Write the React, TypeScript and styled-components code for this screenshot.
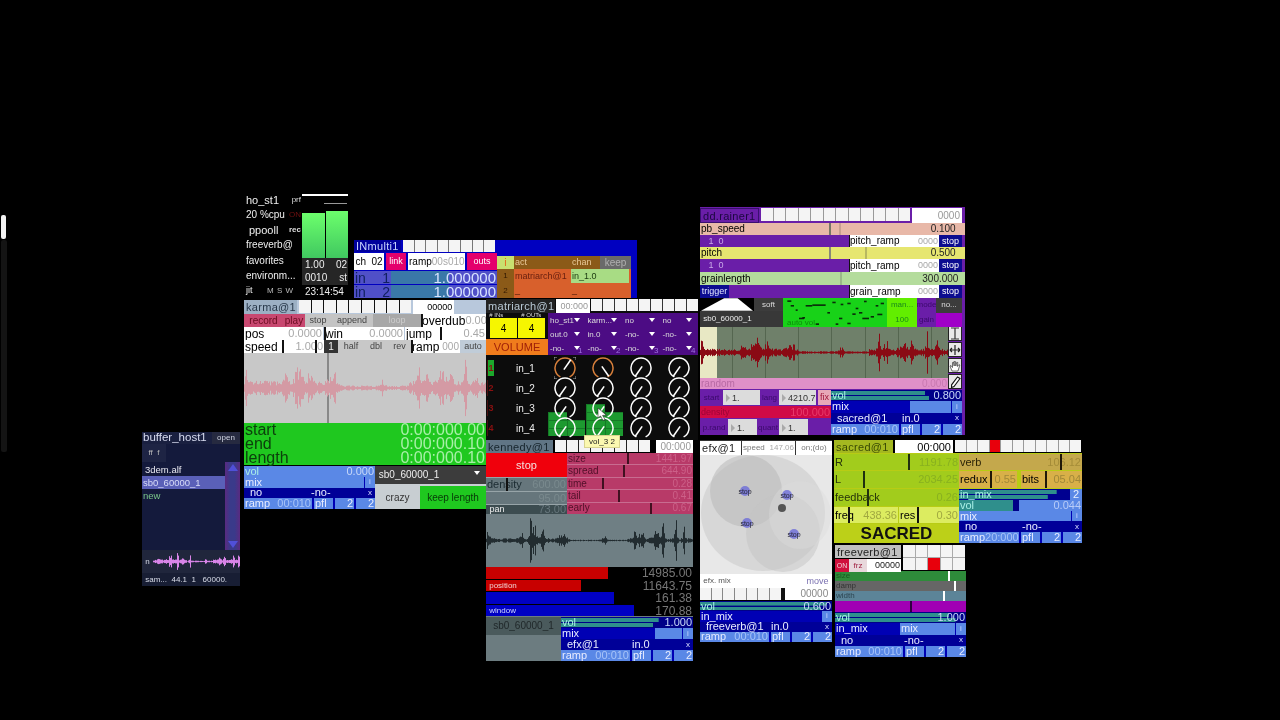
import styled, { createGlobalStyle } from "styled-components";

const GlobalStyle = createGlobalStyle`
  html, body {
    margin: 0;
    background: #000;
  }
  body {
    font-family: "Liberation Sans", Arial, sans-serif;
    overflow: hidden;
  }
`;

const Desktop = styled.div`
  position: relative;
  width: 1280px;
  height: 720px;
  background: #000;
  overflow: hidden;
  filter: blur(0.35px);
`;

// each patcher is a window on the free canvas, so it gets a place of its own
const Module = styled.section<{ $x: number; $y: number; $w: number; $h: number; $bg: string }>`
  position: absolute;
  left: ${(p) => p.$x}px;
  top: ${(p) => p.$y}px;
  width: ${(p) => p.$w}px;
  height: ${(p) => p.$h}px;
  background: ${(p) => p.$bg};
  display: flex;
  flex-direction: column;
  overflow: hidden;
`;

const OpenModule = styled(Module)`
  overflow: visible;
`;

const Row = styled.div<{ $h?: number; $bg?: string; $gap?: number; $pt?: number }>`
  display: flex;
  flex: ${(p) => (p.$h ? `0 0 ${p.$h}px` : "1 1 0")};
  min-height: 0;
  gap: ${(p) => p.$gap ?? 0}px;
  padding-top: ${(p) => p.$pt ?? 0}px;
  background: ${(p) => p.$bg ?? "transparent"};
`;

const Col = styled.div<{ $w?: number; $bg?: string; $gap?: number; $pt?: number }>`
  display: flex;
  flex-direction: column;
  flex: ${(p) => (p.$w ? `0 0 ${p.$w}px` : "1 1 0")};
  min-width: 0;
  gap: ${(p) => p.$gap ?? 0}px;
  padding-top: ${(p) => p.$pt ?? 0}px;
  background: ${(p) => p.$bg ?? "transparent"};
`;

const Cell = styled.div<{
  $w?: number;
  $bg?: string;
  $fg?: string;
  $fs?: number;
  $center?: boolean;
}>`
  position: relative;
  flex: ${(p) => (p.$w ? `0 0 ${p.$w}px` : "1 1 0")};
  min-width: 0;
  display: flex;
  align-items: center;
  justify-content: ${(p) => (p.$center ? "center" : "space-between")};
  padding: 0 ${(p) => (p.$center ? 0 : 1)}px;
  box-sizing: border-box;
  overflow: hidden;
  white-space: nowrap;
  background: ${(p) => p.$bg ?? "transparent"};
  color: ${(p) => p.$fg ?? "#000"};
  font-size: ${(p) => p.$fs ?? 11}px;
  line-height: 1;
`;

const Dim = styled.span<{ $fg?: string; $fs?: number }>`
  color: ${(p) => p.$fg ?? "#a8a8a8"};
  font-size: ${(p) => (p.$fs ? `${p.$fs}px` : "inherit")};
  margin-left: auto;
`;

const Tick = styled.i<{ $at: number; $fg?: string }>`
  position: absolute;
  left: ${(p) => p.$at}px;
  top: 0;
  bottom: 0;
  width: 2px;
  background: ${(p) => p.$fg ?? "#111"};
`;

const ToggleGrid = styled.div<{ $cols: number; $cell: number; $h: number; $edge: string }>`
  display: grid;
  grid-template-columns: repeat(${(p) => p.$cols}, ${(p) => p.$cell}px);
  grid-auto-rows: ${(p) => p.$h}px;
  gap: 1px;
  background: ${(p) => p.$edge};
  align-self: flex-start;
`;

const ToggleBox = styled.b<{ $on?: boolean }>`
  background: ${(p) => (p.$on ? "#e8000c" : "#f4f4f4")};
`;

function Toggles(props: { count: number; cols?: number; cell: number; h: number; edge?: string; on?: number }) {
  const boxes = Array.from({ length: props.count }, (_, i) => i);
  return (
    <ToggleGrid $cols={props.cols ?? props.count} $cell={props.cell} $h={props.h} $edge={props.edge ?? "#999"}>
      {boxes.map((i) => (
        <ToggleBox key={i} $on={i === props.on} />
      ))}
    </ToggleGrid>
  );
}

/* ---- shared output strip (vol / mix / target / ramp) ---- */

const Bars = styled.div<{ $top: number; $low: number; $color: string }>`
  position: absolute;
  left: 0;
  right: 0;
  top: 1px;
  bottom: 1px;
  background:
    linear-gradient(${(p) => p.$color}, ${(p) => p.$color}) left top / ${(p) => p.$top}% 45% no-repeat,
    linear-gradient(${(p) => p.$color}, ${(p) => p.$color}) left bottom / ${(p) => p.$low}% 45% no-repeat;
`;

const OverBars = styled.span<{ $fg: string }>`
  position: relative;
  color: ${(p) => p.$fg};
`;

function VolRow(p: { label?: string; value: string; top: number; low: number; bg?: string; right?: string }) {
  return (
    <Row $bg={p.bg ?? "#000088"}>
      <Cell $bg="transparent" $fg="#9fe8e0">
        <Bars $top={p.top} $low={p.low} $color="#2f8f8c" />
        <OverBars $fg="#a9efe6">{p.label ?? "vol"}</OverBars>
        <OverBars $fg="#c8d8f8">{p.value}</OverBars>
      </Cell>
      {p.right && (
        <Cell $w={12} $bg="#5a88e6" $fg="#e8f0ff" $center>
          {p.right}
        </Cell>
      )}
    </Row>
  );
}

function MixRow(p: { label?: string; barFrom?: number; barLabel?: string; end?: number }) {
  return (
    <Row $bg="#0000b4" $gap={1}>
      {p.label && (
        <Cell $w={p.barFrom} $fg="#e8ecff">
          {p.label}
        </Cell>
      )}
      <Cell $bg={p.barLabel !== undefined ? "#5a88e6" : "transparent"} $fg="#e8ecff">
        {p.barLabel}
      </Cell>
      <Cell $w={p.end ?? 10} $bg="#5a88e6" $fg="#c8d4ff" $fs={8} $center>
        i
      </Cell>
    </Row>
  );
}

const TargetName = styled.span`
  color: #e8ecff;
  padding-left: 5px;
`;

function TargetRow(p: { name: string; chan: string; split: number }) {
  return (
    <Row $bg="#000098">
      <Cell $w={p.split} $fg="#e8ecff">
        <TargetName>{p.name}</TargetName>
      </Cell>
      <Cell $fg="#e8ecff">{p.chan}</Cell>
      <Cell $w={10} $fg="#d8e0ff" $fs={8} $center>
        x
      </Cell>
    </Row>
  );
}

function RampRow(p: { time: string }) {
  return (
    <Row $bg="#0000b4" $gap={2}>
      <Cell $bg="#5a88e6" $fg="#e8ecff">
        ramp
        <Dim $fg="#a8c4f8">{p.time}</Dim>
      </Cell>
      <Cell $w={19} $bg="#5a88e6" $fg="#e8ecff">
        pfl
      </Cell>
      <Cell $w={19} $bg="#5a88e6" $fg="#e8ecff">
        <Dim $fg="#e8ecff">2</Dim>
      </Cell>
      <Cell $w={19} $bg="#5a88e6" $fg="#e8ecff">
        <Dim $fg="#e8ecff">2</Dim>
      </Cell>
    </Row>
  );
}

/* ---- drawings ---- */

const BURSTS: [number, number, number][] = [
  [0.008, 0.45, 0.008],
  [0.17, 0.35, 0.01],
  [0.215, 0.9, 0.008],
  [0.235, 0.8, 0.01],
  [0.27, 0.5, 0.012],
  [0.37, 0.28, 0.022],
  [0.57, 0.22, 0.012],
  [0.72, 0.85, 0.006],
  [0.75, 0.4, 0.012],
  [0.82, 0.4, 0.02],
  [0.855, 0.8, 0.006],
  [0.915, 0.95, 0.006],
  [0.955, 0.55, 0.006],
];

function wavePath(w: number, h: number, seed: number, bursts = BURSTS, base = 0.1) {
  let s = seed;
  const rand = () => {
    s = (s * 16807) % 2147483647;
    return s / 2147483647;
  };
  let d = "";
  for (let x = 0; x < w; x++) {
    const t = x / w;
    const quiet = t > 0.38 && t < 0.68 ? 0.35 : 1;
    let a = base * quiet * (0.5 + rand());
    for (const [pos, height, width] of bursts) {
      const r = rand();
      a += height * Math.exp(-(((t - pos) / width) ** 2)) * (0.2 + 0.8 * r * r);
    }
    a = Math.min(a, 1) * (h / 2);
    d += `M${x + 0.5} ${(h / 2 - a).toFixed(1)}V${(h / 2 + a).toFixed(1)}`;
  }
  return d;
}

const WaveBox = styled.div<{ $h: number; $bg: string }>`
  position: relative;
  flex: 0 0 ${(p) => p.$h}px;
  background: ${(p) => p.$bg};
  overflow: hidden;

  svg {
    position: absolute;
    inset: 0;
    display: block;
  }
`;

function Wave(p: {
  w: number;
  h: number;
  color: string;
  bg: string;
  seed: number;
  bursts?: [number, number, number][];
  base?: number;
  children?: React.ReactNode;
}) {
  return (
    <WaveBox $h={p.h} $bg={p.bg}>
      {p.children}
      <svg width={p.w} height={p.h} viewBox={`0 0 ${p.w} ${p.h}`}>
        <path d={wavePath(p.w, p.h, p.seed, p.bursts, p.base)} stroke={p.color} strokeWidth={1} fill="none" />
      </svg>
    </WaveBox>
  );
}

const Playhead = styled.i<{ $at: number; $fg: string; $w?: number }>`
  position: absolute;
  top: 0;
  bottom: 0;
  left: ${(p) => p.$at}px;
  width: ${(p) => p.$w ?? 1}px;
  background: ${(p) => p.$fg};
`;

function Dial({ needle, color = "#fff", marked }: { needle: number; color?: string; marked?: boolean }) {
  const rad = (needle * Math.PI) / 180;
  const x2 = 11 + 10 * Math.sin(rad);
  const y2 = 11 - 10 * Math.cos(rad);
  const x1 = 11 - 2 * Math.sin(rad);
  const y1 = 11 + 2 * Math.cos(rad);
  return (
    <svg width={22} height={22} viewBox="0 0 22 22">
      <path d="M6.4 19.9A10 10 0 1 1 15.6 19.9" fill="none" stroke={color} strokeWidth={1.5} />
      <path d={`M${x1} ${y1}L${x2} ${y2}`} stroke="#fff" strokeWidth={1.6} />
      {marked && (
        <path d="M0 3V0H3M19 0H22V3M22 19V22H19M3 22H0V19" fill="none" stroke="#ccc" strokeWidth={0.8} />
      )}
    </svg>
  );
}

/* ---- host panel ---- */

const HostLine = styled.div<{ $fs?: number; $pl?: number }>`
  flex: 1 1 0;
  display: flex;
  align-items: center;
  justify-content: space-between;
  padding-left: ${(p) => p.$pl ?? 2}px;
  font-size: ${(p) => p.$fs ?? 10}px;
  color: #eee;
  white-space: nowrap;
`;

const HostTag = styled.span<{ $fg?: string; $bold?: boolean }>`
  font-size: 8px;
  color: ${(p) => p.$fg ?? "#ddd"};
  font-weight: ${(p) => (p.$bold ? 700 : 400)};
  padding-right: 1px;
`;

const HostKeys = styled.span`
  font-size: 8px;
  color: #bbb;
  word-spacing: 1px;
  padding-right: 9px;
`;

const HostTop = styled.div`
  height: 18px;
  padding-top: 2px;
  box-sizing: border-box;
`;

const HostWhite = styled.div`
  height: 2px;
  background: #fff;
`;

const HostGray = styled.div`
  height: 1px;
  margin: 7px 1px 0 22px;
  background: #999;
`;

const Meters = styled.div`
  display: flex;
  gap: 1px;
  height: 48px;
  align-items: flex-end;
`;

const Meter = styled.div<{ $h: number }>`
  flex: 1;
  height: ${(p) => p.$h}px;
  background: linear-gradient(#6cff6c, #40c860);
`;

const HostReadout = styled.div<{ $bg?: string }>`
  flex: 1 1 0;
  display: flex;
  justify-content: space-between;
  align-items: center;
  padding: 0 1px 0 3px;
  font-size: 10px;
  color: #eee;
  white-space: nowrap;
  background: ${(p) => p.$bg ?? "transparent"};
`;

/* ---- small parts ---- */

const Title = styled.div<{ $w: number; $bg: string; $fg: string; $fs?: number; $edge?: string }>`
  flex: 0 0 ${(p) => p.$w}px;
  display: flex;
  align-items: center;
  padding-left: 2px;
  box-sizing: border-box;
  background: ${(p) => p.$bg};
  color: ${(p) => p.$fg};
  font-size: ${(p) => p.$fs ?? 11}px;
  letter-spacing: 0.3px;
  white-space: nowrap;
  overflow: hidden;
  border: ${(p) => (p.$edge ? `1px solid ${p.$edge}` : "none")};
`;

const Clock = styled.div<{ $w: number; $fg?: string; $fs?: number; $ml?: number }>`
  flex: 0 0 ${(p) => p.$w}px;
  margin-left: ${(p) => p.$ml ?? 0}px;
  display: flex;
  align-items: center;
  justify-content: flex-end;
  padding-right: 2px;
  box-sizing: border-box;
  background: #fff;
  color: ${(p) => p.$fg ?? "#000"};
  font-size: ${(p) => p.$fs ?? 10}px;
`;

const NumBox = styled.div<{ $w: number }>`
  flex: 0 0 ${(p) => p.$w}px;
  display: flex;
  align-items: center;
  gap: 2px;
  padding-left: 3px;
  box-sizing: border-box;
  background: #dcdcdc;
  color: #333;
  font-size: 9px;

  &::before {
    content: "";
    border-left: 4px solid #aaa;
    border-top: 4px solid transparent;
    border-bottom: 4px solid transparent;
  }
`;

const Menu = styled.div`
  position: relative;
  display: flex;
  align-items: center;
  padding-left: 2px;
  font-size: 8px;
  color: #ddd;
  white-space: nowrap;

  &::after {
    content: "";
    position: absolute;
    right: 6px;
    top: 5px;
    border-top: 4px solid #fff;
    border-left: 3px solid transparent;
    border-right: 3px solid transparent;
  }
`;

const RoutingMenu = styled(Menu)`
  background: #4c0c84;
`;

const MenuGrid = styled.div`
  position: relative;
  flex: 1;
  display: grid;
  grid-template-columns: repeat(4, 1fr);
  grid-template-rows: repeat(3, 1fr);
`;

const OutputNo = styled.span<{ $at: number }>`
  position: absolute;
  bottom: 0;
  left: ${(p) => p.$at}px;
  font-size: 8px;
  color: #a070e0;
`;

const SmallCaption = styled.div`
  display: flex;
  justify-content: space-between;
  height: 5px;
  font-size: 6px;
  line-height: 5px;
  color: #ddd;
`;

const YellowBox = styled.div`
  flex: 1;
  display: flex;
  align-items: center;
  justify-content: center;
  background: #f6f600;
  font-size: 10px;
  color: #000;
`;

const VolumeButton = styled.div`
  height: 16px;
  display: flex;
  align-items: center;
  justify-content: center;
  background: #f07c1c;
  color: #a02008;
  font-size: 11px;
  margin-top: 1px;
`;

const InputList = styled.div`
  flex: 0 0 60px;
  display: grid;
  grid-auto-rows: 20px;
`;

const InputLine = styled.div`
  display: flex;
  align-items: center;
  font-size: 10px;
  color: #eee;
`;

const InputNo = styled.span<{ $on?: boolean }>`
  flex: 0 0 6px;
  height: 16px;
  margin: 0 22px 0 1px;
  display: flex;
  align-items: center;
  justify-content: center;
  font-size: 9px;
  font-weight: 700;
  color: #8a1010;
  background: ${(p) => (p.$on ? "#1ca82c" : "transparent")};
  border-left: 1px solid #4a1010;
`;

const DialMatrix = styled.div`
  position: relative;
  display: grid;
  grid-template-columns: repeat(4, 38px);
  grid-auto-rows: 20px;
  justify-items: center;
  align-items: center;
`;

const Patch = styled.i<{ $x: number; $y: number; $w: number; $h: number }>`
  position: absolute;
  left: ${(p) => p.$x}px;
  top: ${(p) => p.$y}px;
  width: ${(p) => p.$w}px;
  height: ${(p) => p.$h}px;
  background-color: #1d9a30;
  background-image:
    linear-gradient(90deg, #157a26 1px, transparent 1px),
    linear-gradient(#157a26 1px, transparent 1px);
  background-size: 19px 8px;
`;

const DialSlot = styled.div`
  position: relative;
  line-height: 0;
`;

const Hint = styled.div`
  position: absolute;
  left: 584px;
  top: 435px;
  z-index: 3;
  width: 36px;
  height: 13px;
  display: flex;
  align-items: center;
  justify-content: center;
  background: #fbf8b0;
  color: #222;
  font-size: 8px;
  border: 1px solid #d8d490;
  box-sizing: border-box;
`;

const Pointer = styled.svg`
  position: absolute;
  left: 111px;
  top: 109px;
  z-index: 3;
`;

const ToolCol = styled.div`
  flex: 0 0 14px;
  margin-top: -1px;
  display: flex;
  flex-direction: column;
  gap: 1px;
`;

const Tool = styled.div`
  height: 15px;
  display: flex;
  align-items: center;
  justify-content: center;
  background: #e8e8e8;
  border: 1px solid #222;
  box-sizing: border-box;
`;

const Pad = styled.svg`
  display: block;
  flex: 0 0 119px;
`;

const Dashes = styled.svg`
  display: block;
`;

const EdgeBar = styled.div<{ $y: number; $h: number; $bg: string; $w: number }>`
  position: absolute;
  left: 1px;
  top: ${(p) => p.$y}px;
  width: ${(p) => p.$w}px;
  height: ${(p) => p.$h}px;
  background: ${(p) => p.$bg};
  border-radius: 2px;
`;

const FileLine = styled.div<{ $h: number; $bg?: string; $fg: string; $pl?: number }>`
  height: ${(p) => p.$h}px;
  display: flex;
  align-items: center;
  padding-left: ${(p) => p.$pl ?? 1}px;
  font-size: 9.5px;
  background: ${(p) => p.$bg ?? "transparent"};
  color: ${(p) => p.$fg};
  white-space: nowrap;
`;

const ScrollBar = styled.div`
  flex: 0 0 15px;
  position: relative;
  background: linear-gradient(90deg, #5a2a80, #3a3a8a 35%, #3a3a8a 65%, #5a2a80);
`;

const ScrollArrow = styled.i<{ $up?: boolean }>`
  position: absolute;
  left: 3px;
  ${(p) => (p.$up ? "top: 2px;" : "bottom: 2px;")}
  border-left: 5px solid transparent;
  border-right: 5px solid transparent;
  ${(p) => (p.$up ? "border-bottom: 7px solid #5050d8;" : "border-top: 7px solid #5050d8;")}
`;

const InputLabel = styled(Cell)`
  overflow: visible;
  color: #102060;
  font-size: 14px;
`;

const InputRead = styled(Cell)`
  overflow: visible;
  justify-content: flex-end;
  background: linear-gradient(90deg, #3a78a8 58px, #5050c8 58px);
  color: #d8e4ff;
  font-size: 15px;
`;

const TimeCell = styled(Cell)`
  overflow: visible;
  background: #1fc81f;
  color: #0c400c;
  font-size: 16px;
  line-height: 14px;
`;

const SacredBadge = styled(Cell)`
  background: #bcd018;
  color: #111;
  font-size: 17px;
  font-weight: 700;
`;

const DASHES = [
  [275, 283, 12], [285, 297, 10], [330, 297, 20], [350, 295, 40], [410, 287, 10], [435, 293, 8],
  [455, 290, 10], [505, 284, 8], [540, 297, 8], [555, 290, 10], [430, 335, 10], [470, 322, 10],
  [490, 318, 10], [500, 335, 20], [525, 330, 10], [545, 323, 15], [310, 335, 15], [320, 333, 8],
  [360, 352, 10], [420, 352, 8], [455, 350, 10], [480, 305, 8], [300, 310, 6], [395, 318, 8],
];

const BUFFER_BURSTS: [number, number, number][] = [
  [0.05, 0.4, 0.01],
  [0.2, 0.8, 0.02],
  [0.28, 0.9, 0.012],
  [0.34, 0.7, 0.02],
  [0.42, 0.6, 0.012],
  [0.6, 0.45, 0.008],
  [0.76, 0.4, 0.02],
  [0.82, 1, 0.012],
  [0.92, 0.8, 0.012],
  [0.98, 0.9, 0.01],
];

const DIALS = [
  [35, 145, -145, -145],
  [-145, -145, -145, -145],
  [-145, -145, -145, -145],
  [-145, -145, -145, -145],
];

export default function App() {
  return (
    <Desktop>
      <GlobalStyle />
      <EdgeBar $y={240} $h={212} $w={6} $bg="#141414" />
      <EdgeBar $y={215} $h={24} $w={5} $bg="#f2f2f2" />

      {/* ho_st1 */}
      <Module $x={244} $y={192} $w={104} $h={106} $bg="#000">
        <Row>
          <Col $w={58}>
            <HostLine $fs={11}>
              ho_st1<HostTag>prf</HostTag>
            </HostLine>
            <HostLine>
              20 %cpu<HostTag $fg="#701010">ON</HostTag>
            </HostLine>
            <HostLine $fs={11} $pl={5}>
              ppooll<HostTag $bold>rec</HostTag>
            </HostLine>
            <HostLine>freeverb@</HostLine>
            <HostLine>favorites</HostLine>
            <HostLine>environm...</HostLine>
            <HostLine $fs={9}>
              jit<HostKeys>M&nbsp;S&nbsp;W</HostKeys>
            </HostLine>
          </Col>
          <Col>
            <HostTop>
              <HostWhite />
              <HostGray />
            </HostTop>
            <Meters>
              <Meter $h={45} />
              <Meter $h={47} />
            </Meters>
            <Col>
              <HostReadout $bg="#262626">
                <span>1.00</span>
                <span>02</span>
              </HostReadout>
              <HostReadout $bg="#262626">
                <span>0010</span>
                <span>st</span>
              </HostReadout>
              <HostReadout>
                <span>23:14:54</span>
              </HostReadout>
            </Col>
          </Col>
        </Row>
      </Module>

      {/* INmulti1 */}
      <OpenModule $x={354} $y={240} $w={283} $h={58} $bg="#0000c0">
        <Row>
          <Col $w={143} $gap={1}>
            <Row $h={12} $gap={2}>
              <Title $w={47} $bg="#00009c" $fg="#c8d4ff">
                INmulti1
              </Title>
              <Toggles count={8} cell={10.6} h={12} edge="#777" />
            </Row>
            <Row $h={17} $gap={2}>
              <Cell $w={30} $bg="#fff" $fs={10} $center>
                ch&nbsp;&nbsp;02
              </Cell>
              <Cell $w={20} $bg="#e4006c" $fg="#fff" $fs={9} $center>
                link
              </Cell>
              <Cell $w={57} $bg="#fff" $fs={10}>
                ramp<Dim>00s010</Dim>
              </Cell>
              <Cell $bg="#e4006c" $fg="#fff" $fs={9} $center>
                outs
              </Cell>
            </Row>
            <Row $h={13} $bg="#5050c8">
              <InputLabel $w={37}>
                in<span>1</span>
              </InputLabel>
              <InputRead>1.000000</InputRead>
            </Row>
            <Row $h={13} $bg="#5050c8">
              <InputLabel $w={37}>
                in<span>2</span>
              </InputLabel>
              <InputRead>1.000000</InputRead>
            </Row>
          </Col>
          <Col $w={134} $pt={16}>
            <Row $h={13} $bg="#8b5a18">
              <Cell $w={17} $bg="#c8e070" $fg="#e07020" $center>
                i
              </Cell>
              <Cell $w={57} $fg="#e8c898" $fs={9}>
                act
              </Cell>
              <Cell $w={29} $fg="#e8c898" $fs={9}>
                chan
              </Cell>
              <Cell $bg="#6a6a6a" $fg="#b0b0b0" $fs={10} $center>
                keep
              </Cell>
            </Row>
            <Row $h={14} $bg="#d8602c">
              <Cell $w={17} $bg="#8b5a18" $fg="#301800" $fs={8} $center>
                1
              </Cell>
              <Cell $w={57} $fg="#6a2010" $fs={9}>
                matriarch@1
              </Cell>
              <Cell $bg="#a8dc84" $fg="#1a3a10" $fs={9}>
                in_1.0
              </Cell>
              <Cell $w={2} />
            </Row>
            <Row $h={15} $bg="#d8602c">
              <Cell $w={17} $bg="#8b5a18" $fg="#301800" $fs={8} $center>
                2
              </Cell>
              <Cell $w={57} $fg="#4a1808" $fs={9}>
                _
              </Cell>
              <Cell $fg="#4a1808" $fs={9}>
                _
              </Cell>
            </Row>
          </Col>
        </Row>
      </OpenModule>

      {/* karma@1 */}
      <Module $x={244} $y={300} $w={242} $h={209} $bg="#b8c8dc">
        <Row $h={14} $gap={2}>
          <Title $w={53} $bg="#9cb0c4" $fg="#28384a" $fs={11}>
            karma@1
          </Title>
          <Toggles count={9} cell={11.6} h={13} edge="#111" />
          <Clock $w={41} $fs={9}>
            00000
          </Clock>
        </Row>
        <Row $h={13}>
          <Cell $w={39} $bg="#c84870" $fg="#6a0c20" $fs={10} $center>
            record
          </Cell>
          <Cell $w={22} $bg="#c84870" $fg="#6a0c20" $fs={10} $center>
            play
          </Cell>
          <Cell $w={26} $bg="#c4c4c4" $fg="#444" $fs={9} $center>
            stop
          </Cell>
          <Cell $w={42} $bg="#c4c4c4" $fg="#444" $fs={9} $center>
            append
          </Cell>
          <Cell $w={48} $bg="#a8a8a8" $fg="#ccc" $fs={9} $center>
            loop
          </Cell>
          <Cell $bg="#fff" $fs={12}>
            overdub<Dim $fs={11}>0.00</Dim>
            <Tick $at={0} />
          </Cell>
        </Row>
        <Row $h={13} $gap={1}>
          <Cell $w={79} $bg="#fff" $fs={12}>
            pos<Dim $fs={11}>0.0000</Dim>
          </Cell>
          <Cell $w={80} $bg="#fff" $fs={12}>
            win<Dim $fs={11}>0.0000</Dim>
            <Tick $at={0} />
          </Cell>
          <Cell $bg="#fff" $fs={12}>
            jump<Dim $fs={11}>0.45</Dim>
            <Tick $at={35} />
          </Cell>
        </Row>
        <Row $h={13}>
          <Cell $w={80} $bg="#fff" $fs={12}>
            speed<Dim $fs={11}>1.000</Dim>
            <Tick $at={38} />
            <Tick $at={71} />
          </Cell>
          <Cell $w={14} $bg="#333" $fg="#eee" $fs={10} $center>
            1
          </Cell>
          <Cell $w={26} $bg="#c8c8c8" $fg="#444" $fs={9} $center>
            half
          </Cell>
          <Cell $w={24} $bg="#c8c8c8" $fg="#444" $fs={9} $center>
            dbl
          </Cell>
          <Cell $w={23} $bg="#c8c8c8" $fg="#444" $fs={9} $center>
            rev
          </Cell>
          <Cell $w={49} $bg="#fff" $fs={12}>
            ramp<Dim $fs={10}>000</Dim>
            <Tick $at={0} />
          </Cell>
          <Cell $bg="#c0ccd8" $fg="#444" $fs={9} $center>
            auto
          </Cell>
        </Row>
        <Wave w={242} h={70} color="#d49aa4" bg="#c8c8c8" seed={77} base={0.14}>
          <Playhead $at={83} $fg="#888" $w={2} />
        </Wave>
        <Row $h={14}>
          <TimeCell>
            start<Dim $fg="#a8f0a8">0:00:000.00</Dim>
          </TimeCell>
        </Row>
        <Row $h={14}>
          <TimeCell>
            end<Dim $fg="#a8f0a8">0:00:000.10</Dim>
          </TimeCell>
        </Row>
        <Row $h={14}>
          <TimeCell>
            length<Dim $fg="#a8f0a8">0:00:000.10</Dim>
          </TimeCell>
        </Row>
        <Row $bg="#000" $pt={1}>
          <Col $w={131}>
            <VolRow value="0.000" top={0} low={0} bg="#5a88e6" />
            <MixRow barLabel="mix" />
            <TargetRow name="no" chan="-no-" split={66} />
            <RampRow time="00:010" />
          </Col>
          <Col>
            <Row $h={18} $bg="#3c3c3c">
              <Cell $fg="#eee" $fs={10}>
                &nbsp;sb0_60000_1
              </Cell>
              <Menu />
            </Row>
            <Row $bg="#c8ced2" $pt={2}>
              <Cell $w={45} $fg="#333" $fs={10} $center>
                crazy
              </Cell>
              <Cell $bg="#1fc81f" $fg="#083808" $fs={10} $center>
                keep length
              </Cell>
            </Row>
          </Col>
        </Row>
      </Module>

      {/* matriarch@1 */}
      <Module $x={486} $y={299} $w={212} $h={141} $bg="#0c0c0c">
        <Row $h={14} $gap={1}>
          <Title $w={69} $bg="#222" $fg="#b8c8d4" $fs={11}>
            matriarch@1
          </Title>
          <Clock $w={34} $fg="#999" $fs={9}>
            00:000
          </Clock>
          <Toggles count={9} cell={11} h={12} edge="#333" />
        </Row>
        <Row $h={42}>
          <Col $w={62}>
            <SmallCaption>
              <span>&nbsp;&nbsp;# INs</span>
              <span># OUTs&nbsp;&nbsp;&nbsp;&nbsp;</span>
            </SmallCaption>
            <Row $gap={1}>
              <Cell $w={3} />
              <YellowBox>4</YellowBox>
              <YellowBox>4</YellowBox>
              <Cell $w={2} />
            </Row>
            <VolumeButton>VOLUME</VolumeButton>
          </Col>
          <MenuGrid>
            {[
              "ho_st1", "karm...", "no", "no",
              "out.0", "in.0", "-no-", "-no-",
              "-no-", "-no-", "-no-", "-no-",
            ].map((label, i) => (
              <RoutingMenu key={i}>{label}</RoutingMenu>
            ))}
            <OutputNo $at={30}>1</OutputNo>
            <OutputNo $at={68}>2</OutputNo>
            <OutputNo $at={106}>3</OutputNo>
            <OutputNo $at={143}>4</OutputNo>
          </MenuGrid>
        </Row>
        <Row $pt={3}>
          <InputList>
            {["in_1", "in_2", "in_3", "in_4"].map((name, i) => (
              <InputLine key={name}>
                <InputNo $on={i === 0}>{i + 1}</InputNo>
                {name}
              </InputLine>
            ))}
          </InputList>
          <DialMatrix>
            <Patch $x={2} $y={54} $w={19} $h={8} />
            <Patch $x={2} $y={62} $w={37} $h={16} />
            <Patch $x={40} $y={46} $w={19} $h={8} />
            <Patch $x={40} $y={54} $w={37} $h={24} />
            {DIALS.flatMap((row, r) =>
              row.map((needle, c) => (
                <DialSlot key={`${r}-${c}`}>
                  <Dial needle={needle} color={r === 0 && c < 2 ? "#d8803c" : "#fff"} marked={r === 0 && c === 0} />
                </DialSlot>
              ))
            )}
          </DialMatrix>
        </Row>
        <Pointer width={11} height={13} viewBox="0 0 11 13">
          <path d="M1 0L1 10L3.5 8L6 12.5L8 11.5L5.6 7.4L9.4 7.2Z" fill="#fff" stroke="#222" strokeWidth={0.6} />
        </Pointer>
      </Module>
      <Hint>vol_3 2</Hint>

      {/* kennedy@1 */}
      <Module $x={486} $y={440} $w={207} $h={221} $bg="#6c7c80">
        <Row $h={13} $bg="#000" $gap={2}>
          <Title $w={67} $bg="#607585" $fg="#16242c" $fs={11}>
            kennedy@1
          </Title>
          <Toggles count={8} cell={11} h={12} edge="#222" />
          <Clock $w={37} $fg="#999" $fs={10} $ml={4}>
            00:000
          </Clock>
        </Row>
        <Row $h={61}>
          <Col $w={81} $gap={1} $bg="#97a4a8">
            <Row $h={24} $bg="#f0000c">
              <Cell $fg="#f4e0e0" $fs={11} $center>
                stop
              </Cell>
            </Row>
            <Row $h={13} $bg="#66767c">
              <Cell $fg="#1a2a30" $fs={11}>
                density<Dim $fg="#7a8a8e">600.00</Dim>
                <Tick $at={20} />
              </Cell>
            </Row>
            <Row $h={12} $bg="#66767c">
              <Cell $fg="#1a2a30">
                <Dim $fg="#7a8a8e">95.00</Dim>
              </Cell>
            </Row>
            <Row $bg="#3c4c50">
              <Cell $fg="#eee" $fs={9}>
                &nbsp;pan<Dim $fg="#66767c" $fs={11}>73.00</Dim>
              </Cell>
            </Row>
          </Col>
          <Col $gap={1} $bg="#c86c90">
            {[
              ["size", "1441.97", 60],
              ["spread", "644.90", 56],
              ["time", "0.28", 35],
              ["tail", "0.41", 51],
              ["early", "0.67", 83],
            ].map(([name, value, at]) => (
              <Row key={name as string} $bg="#b83a68">
                <Cell $fg="#501028" $fs={10}>
                  {name}
                  <Dim $fg="#cc6088">{value}</Dim>
                  <Tick $at={at as number} $fg="#401020" />
                </Cell>
              </Row>
            ))}
          </Col>
        </Row>
        <Wave w={207} h={53} color="#222c30" bg="#6f7f84" seed={411} base={0.06} />
        <Row $h={12} $bg="#000">
          <Cell $w={122} $bg="#c80000" />
          <Cell $fg="#777" $fs={12}>
            <Dim $fg="#777">14985.00</Dim>
          </Cell>
        </Row>
        <Row $h={11} $bg="#000" $pt={1}>
          <Cell $w={95} $bg="#c80000" $fg="#f0d0d0" $fs={8}>
            &nbsp;position
          </Cell>
          <Cell $fg="#777" $fs={12}>
            <Dim $fg="#777">11643.75</Dim>
          </Cell>
        </Row>
        <Row $h={12} $bg="#000" $pt={1}>
          <Cell $w={128} $bg="#0000c4" />
          <Cell $fg="#777" $fs={12}>
            <Dim $fg="#777">161.38</Dim>
          </Cell>
        </Row>
        <Row $h={11} $bg="#000" $pt={1}>
          <Cell $w={148} $bg="#0000c4" $fg="#d0d8ff" $fs={8}>
            &nbsp;window
          </Cell>
          <Cell $fg="#777" $fs={12}>
            <Dim $fg="#777">170.88</Dim>
          </Cell>
        </Row>
        <Row $pt={1}>
          <Col $w={75}>
            <Row $h={18} $bg="#4a5a5c">
              <Cell $fg="#20282a" $fs={10} $center>
                sb0_60000_1
              </Cell>
            </Row>
          </Col>
          <Col>
            <VolRow value="1.000" top={74} low={70} />
            <MixRow label="mix" barFrom={93} barLabel="" />
            <TargetRow name="efx@1" chan="in.0" split={70} />
            <RampRow time="00:010" />
          </Col>
        </Row>
      </Module>

      {/* dd.rainer1 */}
      <Module $x={700} $y={207} $w={265} $h={228} $bg="#6a1ea8">
        <Row $h={15} $gap={2} $pt={1}>
          <Title $w={59} $bg="#6a1ea8" $fg="#1c0840" $edge="#3a1070" $fs={11}>
            dd.rainer1
          </Title>
          <Toggles count={12} cell={11.5} h={13} edge="#999" />
          <Clock $w={50} $fg="#999" $fs={10}>
            0000
          </Clock>
        </Row>
        <Row $h={12}>
          <Cell $bg="#e8b8a8" $fs={10}>
            pb_speed<Dim $fg="#222">0.100&nbsp;&nbsp;&nbsp;</Dim>
            <Tick $at={129} $fg="#776" />
            <Tick $at={139} $fg="#c8a090" />
          </Cell>
        </Row>
        <Row $h={12}>
          <Cell $fg="#c8a8e8" $fs={9}>
            &nbsp;&nbsp;&nbsp;1&nbsp;&nbsp;0
          </Cell>
          <Cell $w={90} $bg="#fff" $fs={10}>
            pitch_ramp<Dim $fs={9}>0000</Dim>
            <Tick $at={-1} />
          </Cell>
          <Cell $w={23} $bg="#0c0c90" $fg="#fff" $fs={9} $center>
            stop
          </Cell>
          <Cell $w={3} />
        </Row>
        <Row $h={12}>
          <Cell $bg="#e6e670" $fs={10}>
            pitch<Dim $fg="#222">0.500&nbsp;&nbsp;&nbsp;</Dim>
            <Tick $at={129} $fg="#887" />
            <Tick $at={165} $fg="#b8b860" />
          </Cell>
        </Row>
        <Row $h={13}>
          <Cell $fg="#c8a8e8" $fs={9}>
            &nbsp;&nbsp;&nbsp;1&nbsp;&nbsp;0
          </Cell>
          <Cell $w={90} $bg="#fff" $fs={10}>
            pitch_ramp<Dim $fs={9}>0000</Dim>
            <Tick $at={-1} />
          </Cell>
          <Cell $w={23} $bg="#0c0c90" $fg="#fff" $fs={9} $center>
            stop
          </Cell>
          <Cell $w={3} />
        </Row>
        <Row $h={13}>
          <Cell $bg="#b4dc9c" $fs={10}>
            grainlength<Dim $fg="#222">300.000&nbsp;&nbsp;</Dim>
            <Tick $at={140} $fg="#9ab888" />
          </Cell>
        </Row>
        <Row $h={13}>
          <Cell $w={29} $bg="#0c0c90" $fg="#e0e4ff" $fs={9} $center>
            trigger
          </Cell>
          <Cell />
          <Cell $w={90} $bg="#fff" $fs={10}>
            grain_ramp<Dim $fs={9}>0000</Dim>
            <Tick $at={-1} />
          </Cell>
          <Cell $w={23} $bg="#0c0c90" $fg="#fff" $fs={9} $center>
            stop
          </Cell>
          <Cell $w={3} />
        </Row>
        <Row $h={29}>
          <Col $w={83}>
            <Row $h={13} $bg="#222">
              <Cell $w={54} $bg="#000">
                <svg width={54} height={13} viewBox="0 0 54 13">
                  <path d="M0 13L24 0H38L54 13Z" fill="#fff" />
                </svg>
              </Cell>
              <Cell $bg="#3c3c3c" $fg="#ddd" $fs={8} $center>
                soft
              </Cell>
            </Row>
            <Row $bg="#383838">
              <Cell $fg="#eee" $fs={8}>
                &nbsp;sb0_60000_1
              </Cell>
            </Row>
          </Col>
          <Col $w={104} $bg="#18d218">
            <Dashes width={104} height={29} viewBox="0 0 104 29">
              {DASHES.map(([x, y, w]) => (
                <rect key={`${x}-${y}`} x={(x - 262) / 3} y={(y - 276) / 3} width={w / 3} height={1.6} fill="#0a2a0a" />
              ))}
              <text x={4} y={27} fontSize={8} fill="#0c8a0c" fontFamily="Liberation Sans">
                auto vol
              </text>
            </Dashes>
          </Col>
          <Col $w={30} $bg="#62ee00">
            <Cell $fg="#1a8a1a" $fs={8} $center>
              man...
            </Cell>
            <Cell $fg="#1a8a1a" $fs={8} $center>
              100
            </Cell>
          </Col>
          <Col $w={19}>
            <Cell $fg="#3a0a6a" $fs={8} $center>
              mode
            </Cell>
            <Cell $fg="#3a0a6a" $fs={8} $center>
              gain
            </Cell>
          </Col>
          <Col $w={26}>
            <Cell $bg="#3c3c3c" $fg="#ddd" $fs={8} $center>
              no...
            </Cell>
            <Cell $bg="#a000c8" $fg="#ddd" $fs={8} />
          </Col>
        </Row>
        <Row $h={62}>
          <Col $w={248}>
            <Wave w={248} h={51} color="#8a0a14" bg="#6f806a" seed={991}>
              <Playhead $at={0} $fg="#e8e8c4" $w={17} />
              <Playhead $at={32} $fg="#556650" />
              <Playhead $at={65} $fg="#556650" />
              <Playhead $at={98} $fg="#556650" />
              <Playhead $at={131} $fg="#556650" />
              <Playhead $at={165} $fg="#556650" />
              <Playhead $at={198} $fg="#556650" />
              <Playhead $at={231} $fg="#556650" />
            </Wave>
            <Row $bg="#e090c8">
              <Cell $fg="#b86aa4" $fs={10}>
                random<Dim $fg="#c878b0">0.000</Dim>
              </Cell>
            </Row>
          </Col>
          <ToolCol>
            <Tool>
              <svg width={10} height={13} viewBox="0 0 10 13">
                <path d="M1 1H9M5 1V12M1 12H9" fill="none" stroke="#333" strokeWidth={1.2} />
              </svg>
            </Tool>
            <Tool>
              <svg width={12} height={10} viewBox="0 0 12 10">
                <path d="M6 0V10M1 5H11M1 5L3 3M1 5L3 7M11 5L9 3M11 5L9 7" fill="none" stroke="#222" strokeWidth={1.2} />
              </svg>
            </Tool>
            <Tool>
              <svg width={12} height={12} viewBox="0 0 12 12">
                <path
                  d="M3 11L1 6L2 5.5L3.5 7.5V2.5L4.5 2L5.2 6V1.5L6.4 1.5L6.8 6L7.8 2.2L8.8 2.5L8.4 6.5L10 4.5L10.8 5L9 11Z"
                  fill="#fff"
                  stroke="#333"
                  strokeWidth={0.7}
                />
              </svg>
            </Tool>
            <Tool>
              <svg width={11} height={12} viewBox="0 0 11 12">
                <path d="M7.5 1L10 2.5L4 10.5L1.5 11.5L1.6 8.8Z" fill="#fff" stroke="#111" strokeWidth={1.1} />
              </svg>
            </Tool>
          </ToolCol>
        </Row>
        <Row $pt={1}>
          <Col $w={131}>
            <Row $h={15}>
              <Cell $w={23} $fg="#3a0a6a" $fs={8} $center>
                start
              </Cell>
              <NumBox $w={37}>1.</NumBox>
              <Cell $w={19} $fg="#3a0a6a" $fs={8} $center>
                lang
              </Cell>
              <NumBox $w={37}>4210.7</NumBox>
              <Cell $w={1} />
              <Cell $bg="#e8a8b8" $fg="#a0183c" $fs={9} $center>
                fix
              </Cell>
            </Row>
            <Row $h={12} $pt={1}>
              <Cell $bg="#d00a46" $fg="#9c0434" $fs={9}>
                density<Dim $fg="#e83a6a" $fs={11}>100.000</Dim>
              </Cell>
            </Row>
            <Row $h={17} $pt={1}>
              <Cell $w={28} $fg="#3a0a6a" $fs={8} $center>
                p.rand
              </Cell>
              <NumBox $w={29}>1.</NumBox>
              <Cell $w={22} $fg="#3a0a6a" $fs={8} $center>
                quant
              </Cell>
              <NumBox $w={29}>1.</NumBox>
            </Row>
          </Col>
          <Col $w={131}>
            <VolRow value="0.800" top={72} low={75} />
            <MixRow label="mix" barFrom={78} barLabel="" />
            <TargetRow name="sacred@1" chan="in.0" split={70} />
            <RampRow time="00:010" />
          </Col>
        </Row>
      </Module>

      {/* efx@1 */}
      <Module $x={700} $y={440} $w={132} $h={202} $bg="#fff">
        <Row $h={14} $bg="#333" $gap={1} $pt={1}>
          <Title $w={41} $bg="#fff" $fg="#222" $fs={11}>
            efx@1
          </Title>
          <Cell $w={53} $bg="#fff" $fg="#777" $fs={8}>
            speed<Dim>147.06</Dim>
          </Cell>
          <Cell $bg="#fff" $fg="#777" $fs={8} $center>
            on;(do)
          </Cell>
        </Row>
        <Pad width={132} height={119} viewBox="0 0 132 119">
          <rect width={132} height={119} fill="#e8e8e8" />
          <ellipse cx={63} cy={58} rx={62} ry={58} fill="#d0d0d0" fillOpacity={0.7} />
          <ellipse cx={46} cy={36} rx={36} ry={36} fill="#b8b8b8" fillOpacity={0.55} />
          <ellipse cx={83} cy={78} rx={37} ry={39} fill="#c4c4c4" fillOpacity={0.5} />
          <ellipse cx={100} cy={60} rx={31} ry={34} fill="#ddd" fillOpacity={0.4} />
          {[
            [45, 36],
            [87, 40],
            [47, 68],
            [94, 79],
          ].map(([cx, cy]) => (
            <g key={cx}>
              <circle cx={cx} cy={cy} r={5} fill="#6c6cd8" fillOpacity={0.8} />
              <text x={cx} y={cy + 2.5} fontSize={7} fill="#223" textAnchor="middle" fontFamily="Liberation Sans">
                stop
              </text>
            </g>
          ))}
          <circle cx={82} cy={53} r={4} fill="#555" />
        </Pad>
        <Row $h={14}>
          <Cell $fg="#555" $fs={8}>
            &nbsp;efx. mix<Dim $fg="#7a70b0" $fs={9}>move&nbsp;</Dim>
          </Cell>
        </Row>
        <Row $h={12}>
          <Toggles count={7} cell={10.7} h={12} edge="#888" />
          <Cell $w={1} $bg="#111" />
          <Cell $w={1} $bg="#111" />
          <Cell $fg="#888" $fs={10}>
            <Dim $fg="#888">00000&nbsp;</Dim>
          </Cell>
        </Row>
        <Row $bg="#000" $pt={1}>
          <Col>
            <VolRow value="0.600" top={96} low={92} />
            <MixRow label="in_mix" barFrom={64} end={10} />
            <TargetRow name="freeverb@1" chan="in.0" split={70} />
            <RampRow time="00:010" />
          </Col>
        </Row>
      </Module>

      {/* sacred@1 */}
      <Module $x={834} $y={440} $w={248} $h={103} $bg="#b8cc14">
        <Row $h={13} $bg="#000" $gap={2}>
          <Title $w={59} $bg="#a4b820" $fg="#3a4a04" $fs={11}>
            sacred@1
          </Title>
          <Clock $w={58} $fs={11}>
            00:000
          </Clock>
          <Toggles count={11} cell={10.5} h={12} edge="#999" on={3} />
        </Row>
        <Row>
          <Col $w={125} $gap={1} $pt={1}>
            <Row $h={16}>
              <Cell $bg="#a2cc1c" $fg="#26340a" $fs={11}>
                R<Dim $fg="#88b020">1191.78</Dim>
                <Tick $at={74} $fg="#203010" />
              </Cell>
            </Row>
            <Row $h={17}>
              <Cell $bg="#a2cc1c" $fg="#26340a" $fs={11}>
                L<Dim $fg="#88b020">2034.25</Dim>
                <Tick $at={29} $fg="#203010" />
              </Cell>
            </Row>
            <Row $h={17}>
              <Cell $bg="#a2cc1c" $fg="#26340a" $fs={11}>
                feedback<Dim $fg="#88b020">0.26</Dim>
                <Tick $at={33} $fg="#203010" />
              </Cell>
            </Row>
            <Row $h={16} $gap={1}>
              <Cell $w={64} $bg="#dcec60" $fs={11}>
                freq<Dim $fg="#a0a840">438.36</Dim>
                <Tick $at={14} />
              </Cell>
              <Cell $bg="#dcec60" $fs={11}>
                res<Dim $fg="#a0a840">0.30</Dim>
                <Tick $at={18} />
              </Cell>
            </Row>
            <SacredBadge $center>SACRED</SacredBadge>
          </Col>
          <Col $gap={1} $pt={1}>
            <Row $h={16}>
              <Cell $bg="#c4a84c" $fg="#2c2408" $fs={11}>
                verb<Dim $fg="#a48c38">106.12</Dim>
                <Tick $at={101} $fg="#201808" />
              </Cell>
            </Row>
            <Row $h={17} $gap={4}>
              <Cell $w={58} $bg="#d8b048" $fs={11}>
                redux<Dim $fg="#a08838">0.55</Dim>
                <Tick $at={31} $fg="#201808" />
              </Cell>
              <Cell $bg="#d8b048" $fs={11}>
                bits<Dim $fg="#a08838">05.04</Dim>
                <Tick $at={24} $fg="#201808" />
              </Cell>
            </Row>
            <Col>
              <VolRow label="in_mix" value="" top={88} low={80} right="2" bg="#000090" />
              <Row $bg="#5a88e6">
                <Cell $fg="#a9efe6" $w={54} $bg="#2f8f8c">
                  vol
                </Cell>
                <Cell $w={6} $bg="#000088" />
                <Cell $fg="#b8ccf8">
                  <Dim $fg="#b8ccf8">0.044</Dim>
                </Cell>
              </Row>
              <MixRow barLabel="mix" />
              <TargetRow name="no" chan="-no-" split={62} />
              <RampRow time="20:000" />
            </Col>
          </Col>
        </Row>
      </Module>

      {/* freeverb@1 */}
      <Module $x={835} $y={545} $w={131} $h={112} $bg="#000">
        <Row $h={26} $gap={2}>
          <Col $w={66}>
            <Title $w={13} $bg="#c0c0c0" $fg="#222" $fs={11}>
              freeverb@1
            </Title>
            <Row $h={13} $pt={1}>
              <Cell $w={14} $bg="#d0103c" $fg="#f0d0d8" $fs={7} $center>
                ON
              </Cell>
              <Cell $w={18} $bg="#e8d8dc" $fg="#a02040" $fs={8} $center>
                frz
              </Cell>
              <Cell $bg="#fff" $fs={9}>
                <Dim $fg="#222">00000</Dim>
              </Cell>
            </Row>
          </Col>
          <Toggles count={10} cols={5} cell={11.6} h={12} edge="#aaa" on={7} />
        </Row>
        <Row $h={10} $bg="#2e8b3a">
          <Cell $fg="#1a5a20" $fs={8}>
            size
            <Tick $at={113} $fg="#fff" />
          </Cell>
        </Row>
        <Row $h={10} $bg="#666">
          <Cell $fg="#333" $fs={8}>
            damp
            <Tick $at={119} $fg="#fff" />
          </Cell>
        </Row>
        <Row $h={10} $bg="#5c8498">
          <Cell $fg="#2c4450" $fs={8}>
            width
            <Tick $at={108} $fg="#fff" />
          </Cell>
        </Row>
        <Row $h={11} $bg="#a000b4">
          <Cell>
            <Tick $at={75} $fg="#300040" />
          </Cell>
        </Row>
        <Row>
          <Col>
            <VolRow value="1.000" top={87} low={92} />
            <MixRow label="in_mix" barFrom={64} barLabel="mix" />
            <TargetRow name="no" chan="-no-" split={68} />
            <RampRow time="00:010" />
          </Col>
        </Row>
      </Module>

      {/* buffer_host1 */}
      <Module $x={142} $y={432} $w={98} $h={154} $bg="#141a3c">
        <Row $h={12}>
          <Cell $w={70} $bg="#1a2040" $fg="#d8dcf0" $fs={11.5}>
            buffer_host1
          </Cell>
          <Cell $bg="#262a40" $fg="#d0d4e0" $fs={8} $center>
            open
          </Cell>
        </Row>
        <Row $h={18}>
          <Cell $w={24} $bg="#1e2444" $fg="#bbb" $fs={8} $center>
            ff&nbsp;&nbsp;f
          </Cell>
        </Row>
        <Row>
          <Col>
            <FileLine $h={14} $fg="#e8e8f0" $pl={3}>
              3dem.alf
            </FileLine>
            <FileLine $h={13} $bg="#5a60b8" $fg="#d8dcf8">
              sb0_60000_1
            </FileLine>
            <FileLine $h={12} $fg="#7ac88a">
              new
            </FileLine>
          </Col>
          <ScrollBar>
            <ScrollArrow $up />
            <ScrollArrow />
          </ScrollBar>
        </Row>
        <Row $h={23} $bg="#20263c">
          <Cell $w={11} $fg="#d8dce8" $fs={8} $center>
            n
          </Cell>
          <Col>
            <Wave w={87} h={23} color="#d884e8" bg="#20263c" seed={2551} bursts={BUFFER_BURSTS} base={0.14} />
          </Col>
        </Row>
        <Row $h={13} $bg="#181e34">
          <Cell $fg="#d8dce8" $fs={8}>
            &nbsp;sam...&nbsp;&nbsp;44.1&nbsp;&nbsp;1&nbsp;&nbsp;&nbsp;60000.
          </Cell>
        </Row>
      </Module>
    </Desktop>
  );
}
